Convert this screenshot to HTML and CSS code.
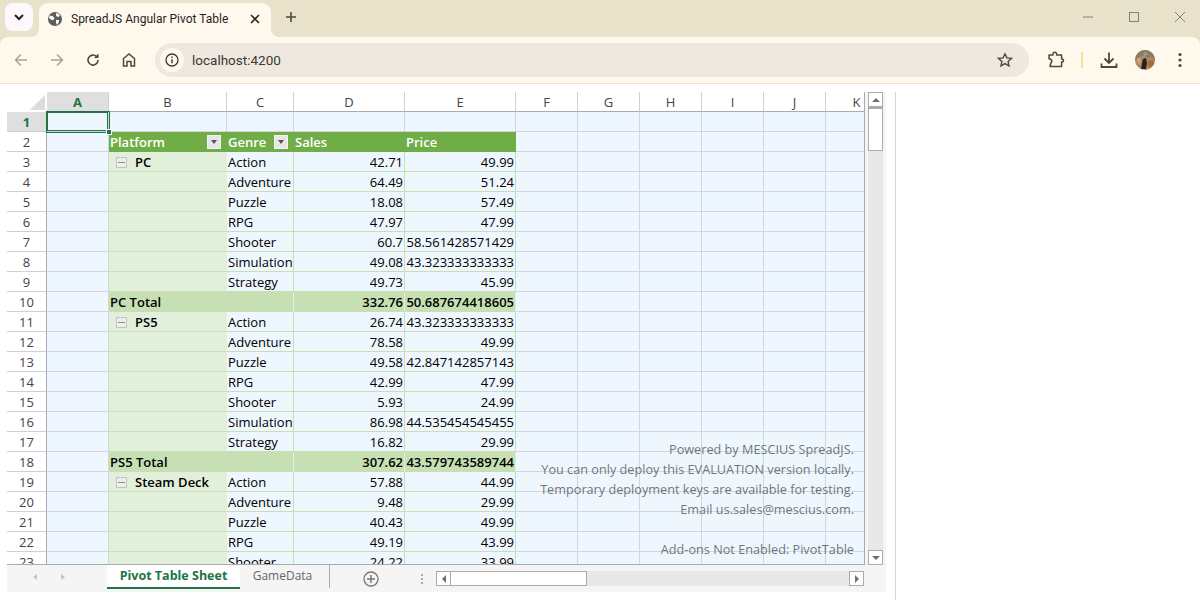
FILE: index.html
```html
<!DOCTYPE html>
<html lang="en">
<head>
    <meta charset="UTF-8">
    <title>SpreadJS Angular Pivot Table</title>
    <link rel="stylesheet" href="styles.css">
</head>
<body>
    <div class="chrome">
        <div class="tabstrip">
            <div class="tab-search">
                <svg width="12" height="12" viewBox="0 0 12 12"><path d="M2 4l4 4 4-4" fill="none" stroke="#1f1f1f" stroke-width="2"/></svg>
            </div>
            <div class="tab">
                <svg class="favicon" width="14" height="14" viewBox="0 0 14 14"><circle cx="7" cy="7" r="7" fill="#5a5d62"/><path d="M1.500 3.500l3 .5 2 2-1 2-2 0-2.500-2zM8 1l3 1 1 2-2 1-2-1zM8 8l3 0 0 2-2 3-1-2z" fill="#fff8ec"/></svg>
                <span class="tab-title">SpreadJS Angular Pivot Table</span>
                <svg class="tab-close" width="10" height="10" viewBox="0 0 10 10"><path d="M1 1l8 8M9 1l-8 8" stroke="#2a2a2a" stroke-width="1.600"/></svg>
            </div>
            <svg class="new-tab" width="12" height="12" viewBox="0 0 12 12"><path d="M6 1v10M1 6h10" stroke="#4f4a38" stroke-width="1.600"/></svg>
            <div class="window-controls">
                <svg width="12" height="12" viewBox="0 0 12 12"><path d="M1 6h10" stroke="#85806f" stroke-width="1"/></svg>
                <svg width="12" height="12" viewBox="0 0 12 12"><rect x="1.500" y="1.500" width="9" height="9" fill="none" stroke="#85806f"/></svg>
                <svg width="12" height="12" viewBox="0 0 12 12"><path d="M1 1l10 10M11 1l-10 10" stroke="#85806f" stroke-width="1"/></svg>
            </div>
        </div>

        <div class="toolbar">
            <svg class="nav-icon" width="16" height="16" viewBox="0 0 16 16"><path d="M14 8H2.500M8 2.500L2.500 8 8 13.500" fill="none" stroke="#a8a498" stroke-width="1.500"/></svg>
            <svg class="nav-icon" width="16" height="16" viewBox="0 0 16 16"><path d="M2 8h11.500M8 2.500L13.500 8 8 13.500" fill="none" stroke="#a8a498" stroke-width="1.500"/></svg>
            <svg class="nav-icon" width="16" height="16" viewBox="0 0 16 16"><path d="M13 8a5 5 0 1 1-1.500-3.500" fill="none" stroke="#4f4a38" stroke-width="1.600"/><path d="M13.500 1.500v4.500H9z" fill="#4f4a38"/></svg>
            <svg class="nav-icon" width="16" height="16" viewBox="0 0 16 16"><path d="M2.500 14V6.500L8 2l5.500 4.500V14h-3.500V9.500H6V14z" fill="none" stroke="#4f4a38" stroke-width="1.500"/></svg>
            <div class="omnibox">
                <div class="site-info">
                    <svg width="14" height="14" viewBox="0 0 14 14"><circle cx="7" cy="7" r="6" fill="none" stroke="#3d3a2f" stroke-width="1.300"/><path d="M7 6.200v4M7 3.500v1.500" stroke="#3d3a2f" stroke-width="1.400"/></svg>
                </div>
                <span class="url">localhost:4200</span>
                <svg class="star" width="16" height="16" viewBox="0 0 16 16"><path d="M8 1.800l1.900 4.100 4.500.5-3.300 3 .9 4.400L8 11.600l-4 2.200.9-4.400-3.300-3 4.500-.5z" fill="none" stroke="#4f4a38" stroke-width="1.400"/></svg>
            </div>
            <svg class="tool-icon" width="18" height="18" viewBox="0 0 18 18"><path d="M2 4h4V3a1.800 1.800 0 0 1 3.600 0v1h5v4h.4a1.500 1.500 0 0 1 0 3h-.4v4.500H3l.8-3.500a2 2 0 0 0 0-3.500L2 7.500z" fill="none" stroke="#4f4a38" stroke-width="1.500" stroke-linejoin="round"/></svg>
            <div class="toolbar-divider"></div>
            <svg class="tool-icon" width="18" height="18" viewBox="0 0 18 18"><path d="M9 1.500v10M4.500 7.500L9 12l4.500-4.500M1.500 12.500v3.500h15v-3.500" fill="none" stroke="#4f4a38" stroke-width="1.800"/></svg>
            <svg class="avatar" width="20" height="20" viewBox="0 0 20 20">
                <circle cx="10" cy="10" r="10" fill="#b08a62"/>
                <path d="M0 10a10 10 0 0 1 20 0l-4-3-4 1-3-3-5 2z" fill="#8f7a5f"/>
                <path d="M8 4l3-2 2 2-3 2z" fill="#7fa6b8"/>
                <path d="M8 9l3-1 1 5-1 6H6l1-6z" fill="#2a211c"/>
                <path d="M13 11l5-1 1 4-4 4-2-2z" fill="#a86a3c"/>
                <path d="M2 8l3 0 1 4-3 2z" fill="#caa98a"/>
            </svg>
            <svg class="tool-icon menu-dots" width="4" height="16" viewBox="0 0 4 16"><circle cx="2" cy="2.500" r="1.600" fill="#4f4a38"/><circle cx="2" cy="8" r="1.600" fill="#4f4a38"/><circle cx="2" cy="13.500" r="1.600" fill="#4f4a38"/></svg>
        </div>
    </div>

    <div class="page">
        <div class="spread">
            <div class="spread-top">
                <div class="viewport">
                    <table class="sheet">
                        <colgroup>
                            <col class="col-head"><col class="col-a"><col class="col-b"><col class="col-c"><col class="col-d"><col class="col-d"><col class="col-a"><col class="col-a"><col class="col-a"><col class="col-a"><col class="col-a"><col class="col-a">
                        </colgroup>
                        <tr class="col-letters"><th class="corner"><div class="corner-mark"></div></th><th class="on">A</th><th>B</th><th>C</th><th>D</th><th>E</th><th>F</th><th>G</th><th>H</th><th>I</th><th>J</th><th>K</th></tr>
                        <tr><th class="on">1</th><td class="active"><div class="fill-handle"></div></td><td></td><td></td><td></td><td></td><td></td><td></td><td></td><td></td><td></td><td></td></tr>
                        <tr><th>2</th><td></td><td class="pv-head">Platform<span class="filter"></span></td><td class="pv-head">Genre<span class="filter"></span></td><td class="pv-head">Sales</td><td class="pv-head">Price</td><td></td><td></td><td></td><td></td><td></td><td></td></tr>
                        <tr><th>3</th><td></td><td class="pv-row"><span class="collapse"></span>PC</td><td class="pv-c">Action</td><td class="pv-n">42.71</td><td class="pv-n">49.99</td><td></td><td></td><td></td><td></td><td></td><td></td></tr>
                        <tr><th>4</th><td></td><td class="pv-row"></td><td class="pv-c">Adventure</td><td class="pv-n">64.49</td><td class="pv-n">51.24</td><td></td><td></td><td></td><td></td><td></td><td></td></tr>
                        <tr><th>5</th><td></td><td class="pv-row"></td><td class="pv-c">Puzzle</td><td class="pv-n">18.08</td><td class="pv-n">57.49</td><td></td><td></td><td></td><td></td><td></td><td></td></tr>
                        <tr><th>6</th><td></td><td class="pv-row"></td><td class="pv-c">RPG</td><td class="pv-n">47.97</td><td class="pv-n">47.99</td><td></td><td></td><td></td><td></td><td></td><td></td></tr>
                        <tr><th>7</th><td></td><td class="pv-row"></td><td class="pv-c">Shooter</td><td class="pv-n">60.7</td><td class="pv-n">58.561428571429</td><td></td><td></td><td></td><td></td><td></td><td></td></tr>
                        <tr><th>8</th><td></td><td class="pv-row"></td><td class="pv-c">Simulation</td><td class="pv-n">49.08</td><td class="pv-n">43.323333333333</td><td></td><td></td><td></td><td></td><td></td><td></td></tr>
                        <tr><th>9</th><td></td><td class="pv-row"></td><td class="pv-c">Strategy</td><td class="pv-n">49.73</td><td class="pv-n">45.99</td><td></td><td></td><td></td><td></td><td></td><td></td></tr>
                        <tr><th>10</th><td></td><td class="pv-total" colspan="2">PC Total</td><td class="pv-total num">332.76</td><td class="pv-total num">50.687674418605</td><td></td><td></td><td></td><td></td><td></td><td></td></tr>
                        <tr><th>11</th><td></td><td class="pv-row"><span class="collapse"></span>PS5</td><td class="pv-c">Action</td><td class="pv-n">26.74</td><td class="pv-n">43.323333333333</td><td></td><td></td><td></td><td></td><td></td><td></td></tr>
                        <tr><th>12</th><td></td><td class="pv-row"></td><td class="pv-c">Adventure</td><td class="pv-n">78.58</td><td class="pv-n">49.99</td><td></td><td></td><td></td><td></td><td></td><td></td></tr>
                        <tr><th>13</th><td></td><td class="pv-row"></td><td class="pv-c">Puzzle</td><td class="pv-n">49.58</td><td class="pv-n">42.847142857143</td><td></td><td></td><td></td><td></td><td></td><td></td></tr>
                        <tr><th>14</th><td></td><td class="pv-row"></td><td class="pv-c">RPG</td><td class="pv-n">42.99</td><td class="pv-n">47.99</td><td></td><td></td><td></td><td></td><td></td><td></td></tr>
                        <tr><th>15</th><td></td><td class="pv-row"></td><td class="pv-c">Shooter</td><td class="pv-n">5.93</td><td class="pv-n">24.99</td><td></td><td></td><td></td><td></td><td></td><td></td></tr>
                        <tr><th>16</th><td></td><td class="pv-row"></td><td class="pv-c">Simulation</td><td class="pv-n">86.98</td><td class="pv-n">44.535454545455</td><td></td><td></td><td></td><td></td><td></td><td></td></tr>
                        <tr><th>17</th><td></td><td class="pv-row"></td><td class="pv-c">Strategy</td><td class="pv-n">16.82</td><td class="pv-n">29.99</td><td></td><td></td><td></td><td></td><td></td><td></td></tr>
                        <tr><th>18</th><td></td><td class="pv-total" colspan="2">PS5 Total</td><td class="pv-total num">307.62</td><td class="pv-total num">43.579743589744</td><td></td><td></td><td></td><td></td><td></td><td></td></tr>
                        <tr><th>19</th><td></td><td class="pv-row"><span class="collapse"></span>Steam Deck</td><td class="pv-c">Action</td><td class="pv-n">57.88</td><td class="pv-n">44.99</td><td></td><td></td><td></td><td></td><td></td><td></td></tr>
                        <tr><th>20</th><td></td><td class="pv-row"></td><td class="pv-c">Adventure</td><td class="pv-n">9.48</td><td class="pv-n">29.99</td><td></td><td></td><td></td><td></td><td></td><td></td></tr>
                        <tr><th>21</th><td></td><td class="pv-row"></td><td class="pv-c">Puzzle</td><td class="pv-n">40.43</td><td class="pv-n">49.99</td><td></td><td></td><td></td><td></td><td></td><td></td></tr>
                        <tr><th>22</th><td></td><td class="pv-row"></td><td class="pv-c">RPG</td><td class="pv-n">49.19</td><td class="pv-n">43.99</td><td></td><td></td><td></td><td></td><td></td><td></td></tr>
                        <tr><th>23</th><td></td><td class="pv-row"></td><td class="pv-c">Shooter</td><td class="pv-n">24.22</td><td class="pv-n">33.99</td><td></td><td></td><td></td><td></td><td></td><td></td></tr>
                    </table>
                    <div class="watermark">
                        <p>Powered by MESCIUS SpreadJS.</p>
                        <p>You can only deploy this EVALUATION version locally.</p>
                        <p>Temporary deployment keys are available for testing.</p>
                        <p>Email us.sales@mescius.com.</p>
                        <p>&nbsp;</p>
                        <p>Add-ons Not Enabled: PivotTable</p>
                    </div>
                </div>
                <div class="vscroll">
                    <div class="sb-btn"><span class="arrow-up"></span></div>
                    <div class="vthumb"></div>
                    <div class="sb-btn"><span class="arrow-down"></span></div>
                </div>
            </div>
            <div class="tabbar">
                <div class="tab-nav">
                    <span class="nav-left"></span>
                    <span class="nav-right"></span>
                </div>
                <div class="sheet-tab current">Pivot Table Sheet</div>
                <div class="sheet-tab">GameData</div>
                <div class="add-sheet">
                    <svg width="16" height="16" viewBox="0 0 16 16"><circle cx="8" cy="8" r="7" fill="none" stroke="#777" stroke-width="1.300"/><path d="M8 4v8M4 8h8" stroke="#777" stroke-width="1.500"/></svg>
                </div>
                <div class="splitter"></div>
                <div class="hscroll">
                    <div class="sb-btn"><span class="arrow-left"></span></div>
                    <div class="hthumb"></div>
                    <div class="sb-btn"><span class="arrow-right"></span></div>
                </div>
            </div>
        </div>
    </div>
</body>
</html>
```
FILE: styles.css
```css
* {
    box-sizing: border-box;
}
html, body {
    height: 100%;
}
body {
    margin: 0;
    background-color: #fff;
    font-family: "Open Sans", "Noto Sans", sans-serif;
    overflow: hidden;
}

/* browser chrome */
.chrome {
    background-color: #e9e2ca;
}
.tabstrip {
    display: flex;
    align-items: flex-end;
    height: 37px;
}
.tab-search {
    width: 28px;
    height: 28px;
    margin: 0 6px 6px 5px;
    border-radius: 8px;
    background-color: #fdf8fb;
    display: flex;
    align-items: center;
    justify-content: center;
}
.tab {
    width: 232px;
    height: 34px;
    background-color: #fff8ec;
    border-radius: 9px 9px 0 0;
    display: flex;
    align-items: center;
    padding: 0 0 3px 9px;
    position: relative;
}
.tab::before, .tab::after {
    content: "";
    position: absolute;
    bottom: 0;
    width: 9px;
    height: 9px;
}
.tab::before {
    left: -9px;
    background: radial-gradient(circle at 0 0, transparent 9px, #fff8ec 9.500px);
}
.tab::after {
    right: -9px;
    background: radial-gradient(circle at 100% 0, transparent 9px, #fff8ec 9.500px);
}
.favicon {
    margin: 0 9px 0 0;
}
.tab-title {
    font-family: Roboto, sans-serif;
    font-size: 12px;
    color: #1f1f1f;
    flex: 1;
}
.tab-close {
    margin-right: 11px;
}
.new-tab {
    margin: 0 0 14px 14px;
}
.window-controls {
    margin-left: auto;
    height: 37px;
    display: flex;
    align-items: center;
    gap: 34px;
    padding: 0 14px 4px 0;
}
.toolbar {
    height: 47px;
    background-color: #fff8ec;
    border-bottom: 1px solid #e8e2d6;
    border-radius: 8px 8px 0 0;
    display: flex;
    align-items: center;
    padding-bottom: 1px;
}
.nav-icon {
    margin-left: 13px;
    margin-right: 7px;
}
.omnibox {
    width: 874px;
    height: 34px;
    margin-left: 11px;
    border-radius: 17px;
    background-color: #efe8e1;
    display: flex;
    align-items: center;
    padding: 0 16px 0 5px;
}
.site-info {
    width: 24px;
    height: 24px;
    border-radius: 12px;
    background-color: #fff8ec;
    display: flex;
    align-items: center;
    justify-content: center;
}
.url {
    font-family: Roboto, sans-serif;
    font-size: 13.500px;
    color: #3a3a30;
    margin-left: 8px;
    flex: 1;
}
.tool-icon {
    margin-left: 18px;
}
.toolbar-divider {
    width: 2px;
    height: 16px;
    background-color: #fbe08c;
    margin-left: 16px;
}
.toolbar-divider + .tool-icon {
    margin-left: 17px;
}
.avatar {
    margin-left: 17px;
}
.menu-dots {
    margin-left: 23px;
}

/* spreadsheet */
.page {
    height: 516px;
    display: flex;
    padding: 8px 0 0 7px;
}
.spread {
    width: 889px;
    height: 508px;
    border-right: 1px solid #d4d4d4;
    padding-right: 9px;
}
.spread-top {
    display: flex;
    height: 473px;
    background-color: #f5f5f5;
}
.viewport {
    width: 858px;
    height: 473px;
    overflow: hidden;
    position: relative;
    border-right: 1px solid #ababab;
    border-bottom: 1px solid #ababab;
}
.sheet {
    border-collapse: separate;
    border-spacing: 0;
    table-layout: fixed;
    width: 881px;
    font-size: 13px;
    color: #000;
}
.col-head { width: 40px; }
.col-a { width: 62px; }
.col-b { width: 118px; }
.col-c { width: 67px; }
.col-d { width: 111px; }
.sheet tr {
    height: 20px;
}
.sheet th {
    font-weight: 400;
    font-size: 13px;
    color: #444;
    background-color: #fff;
    padding: 0;
    border-bottom: 1px solid #d0d0d0;
    border-right: 1px solid #ababab;
    text-align: center;
    height: 20px;
    line-height: 18px;
}
.sheet .col-letters th {
    border-bottom: 1px solid #ababab;
    border-right: 1px solid #d0d0d0;
}
.sheet .col-letters .corner {
    border-right: 0;
    border-bottom: 0;
    position: relative;
}
.corner-mark {
    position: absolute;
    right: 2px;
    bottom: 2px;
    width: 0;
    height: 0;
    border-left: 15px solid transparent;
    border-bottom: 15px solid #dcdcdc;
}
.sheet th.on {
    background-color: #dfdfdf;
    color: #217346;
    font-weight: 700;
}
.sheet td {
    height: 20px;
    padding: 1px 1px 0;
    background-color: #eef6fe;
    border-bottom: 1px solid #d0d7de;
    border-right: 1px solid #d0d7de;
    line-height: 18px;
    white-space: nowrap;
    overflow: hidden;
}
.sheet td.active {
    position: relative;
    z-index: 1;
    overflow: visible;
    box-shadow: inset 0 0 0 1px #217346, 0 0 0 1px #217346;
}
.fill-handle {
    position: absolute;
    right: -4px;
    bottom: -4px;
    width: 6px;
    height: 6px;
    background-color: #217346;
    border: 1px solid #fff;
    z-index: 2;
}
.sheet td.pv-head {
    background-color: #70ad47;
    color: #fff;
    font-weight: 600;
    border-right-color: #70ad47;
    border-bottom-color: #70ad47;
    position: relative;
}
.filter {
    position: absolute;
    right: 5px;
    top: 3px;
    width: 14px;
    height: 14px;
    background-color: #e6e6e6;
    border: 1px solid #f4f4f4;
}
.filter::after {
    content: "";
    position: absolute;
    left: 3px;
    top: 4px;
    border-left: 3px solid transparent;
    border-right: 3px solid transparent;
    border-top: 4px solid #555;
}
.sheet td.pv-row {
    background-color: #e2efda;
    border-right-color: #e2efda;
    border-bottom-color: #c6e0b4;
    font-weight: 600;
}
.collapse {
    display: inline-block;
    width: 11px;
    height: 11px;
    margin: 0 8px 0 6px;
    background: linear-gradient(#8d8d8d, #8d8d8d) center / 7px 1px no-repeat, #eeeeee;
    border: 1px solid #c4c4c4;
    vertical-align: -1px;
}
.sheet td.pv-c, .sheet td.pv-n {
    border-bottom-color: #c6e0b4;
    border-right-color: #c6e0b4;
}
.sheet td.pv-n, .sheet td.num {
    text-align: right;
}
.sheet td.pv-total {
    background-color: #c6e0b4;
    border-bottom-color: #c6e0b4;
    border-right-color: #e2efda;
    font-weight: 600;
}
.watermark {
    position: absolute;
    right: 10px;
    top: 347px;
    text-align: right;
    font-size: 12.700px;
    line-height: 20px;
    color: rgba(50, 50, 50, 0.68);
}
.watermark p {
    margin: 0;
}

/* scrollbars */
.vscroll {
    width: 15px;
    margin-left: 3px;
    background-color: #e8e8e8;
    display: flex;
    flex-direction: column;
}
.sb-btn {
    width: 15px;
    height: 15px;
    background-color: #fff;
    border: 1px solid #ababab;
    display: flex;
    align-items: center;
    justify-content: center;
    flex-shrink: 0;
}
.vscroll .sb-btn:last-child {
    margin-top: auto;
}
.vthumb {
    height: 44px;
    background-color: #fff;
    border: 1px solid #ababab;
    border-top-width: 2px;
}
.arrow-up, .arrow-down, .arrow-left, .arrow-right {
    width: 0;
    height: 0;
    display: block;
}
.arrow-up {
    border-left: 4px solid transparent;
    border-right: 4px solid transparent;
    border-bottom: 4px solid #707070;
}
.arrow-down {
    border-left: 4px solid transparent;
    border-right: 4px solid transparent;
    border-top: 4px solid #707070;
}
.arrow-left {
    border-top: 4px solid transparent;
    border-bottom: 4px solid transparent;
    border-right: 4px solid #707070;
}
.arrow-right {
    border-top: 4px solid transparent;
    border-bottom: 4px solid transparent;
    border-left: 4px solid #707070;
}
.tabbar {
    height: 27px;
    background-color: #f5f5f5;
    display: flex;
    align-items: flex-start;
}
.tab-nav {
    width: 100px;
    height: 24px;
    display: flex;
    align-items: center;
    gap: 24px;
    padding-left: 26px;
}
.nav-left {
    border-top: 3px solid transparent;
    border-bottom: 3px solid transparent;
    border-right: 4px solid #c4c4c4;
}
.nav-right {
    border-top: 3px solid transparent;
    border-bottom: 3px solid transparent;
    border-left: 4px solid #c4c4c4;
}
.sheet-tab {
    height: 23px;
    font-size: 12px;
    line-height: 22px;
    color: #666;
    width: 90px;
    padding-right: 4px;
    text-align: center;
    border-right: 1px solid #ababab;
}
.sheet-tab.current {
    width: 133px;
    height: 24px;
    padding-right: 0;
    background-color: #fff;
    color: #217346;
    font-size: 12.500px;
    font-weight: 700;
    border-right: 0;
    border-bottom: 2px solid #217346;
}
.add-sheet {
    width: 16px;
    height: 16px;
    margin: 5px 0 0 33px;
}
.splitter {
    width: 2px;
    height: 10px;
    margin: 9px 0 0 42px;
    border-left: 2px dotted #aaa;
}
.hscroll {
    width: 428px;
    height: 15px;
    margin: 6px 0 0 13px;
    background-color: #e8e8e8;
    display: flex;
}
.hthumb {
    width: 136px;
    height: 15px;
    background-color: #fff;
    border: 1px solid #ababab;
    border-left: 0;
}
.hscroll .sb-btn:last-child {
    margin-left: auto;
}
```
